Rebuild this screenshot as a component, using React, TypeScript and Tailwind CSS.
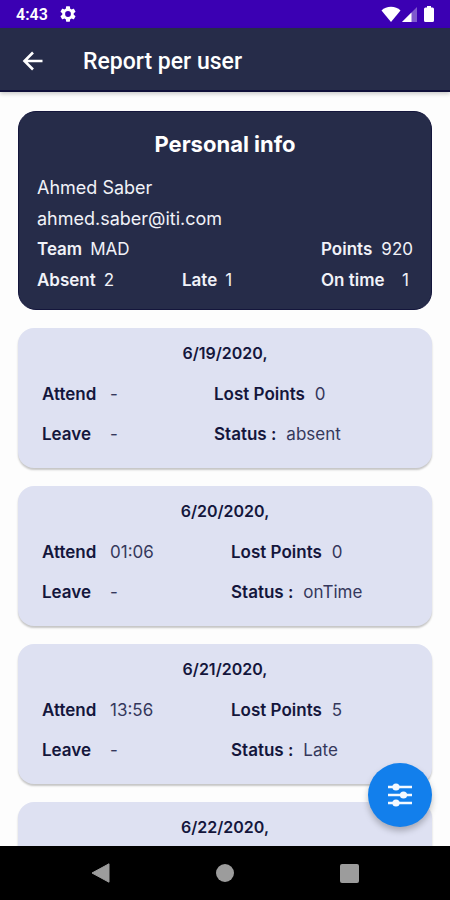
import type { ReactNode } from "react";

type Report = {
  date: string;
  details?: {
    attend: string;
    leave: string;
    lostPoints: number;
    status: string;
  };
};

const reports: Report[] = [
  { date: "6/19/2020,", details: { attend: "-", leave: "-", lostPoints: 0, status: "absent" } },
  { date: "6/20/2020,", details: { attend: "01:06", leave: "-", lostPoints: 0, status: "onTime" } },
  { date: "6/21/2020,", details: { attend: "13:56", leave: "-", lostPoints: 5, status: "Late" } },
  { date: "6/22/2020," },
];

export default function App() {
  return (
    <div className="flex h-dvh flex-col overflow-hidden bg-[#fdfdfd] font-[Inter,'Open_Sans',sans-serif]">
      <StatusBar />
      <AppBar title="Report per user" />
      <div className="relative min-h-0 flex-1">
        <main className="flex h-full flex-col gap-[18px] overflow-y-auto px-[18px] pt-[19px] [scrollbar-width:none]">
          <PersonalInfo />
          {reports.map((report) => (
            <ReportCard key={report.date} report={report} />
          ))}
        </main>
        <button
          aria-label="Filter"
          className="absolute right-[18px] bottom-[19px] flex size-16 items-center justify-center rounded-full bg-[#127fec] shadow-[0_4px_6px_rgba(0,0,0,0.25)]"
        >
          <svg viewBox="0 0 24 24" className="size-6" fill="#f4f9ff">
            <path d="M0 2.8h24v2.4H0zM0 10.8h24v2.4H0zM0 18.8h24v2.4H0z" />
            <circle cx="8" cy="4" r="3.6" />
            <circle cx="15.5" cy="12" r="3.6" />
            <circle cx="8" cy="20" r="3.6" />
          </svg>
        </button>
      </div>
      <NavBar />
    </div>
  );
}

function StatusBar() {
  return (
    <div className="flex h-7 shrink-0 items-center justify-between bg-[#3b00b3] pr-[15px] pl-4 font-[Roboto,sans-serif] text-white">
      <div className="flex items-center gap-3">
        <span className="pt-0.5 text-base leading-6 font-semibold">4:43</span>
        <svg viewBox="2 2 20 20" className="size-4" fill="currentColor">
          <path d="M19.14 12.94c.04-.3.06-.61.06-.94s-.02-.64-.07-.94l2.03-1.58a.49.49 0 0 0 .12-.61l-1.92-3.32a.49.49 0 0 0-.59-.22l-2.39.96a7 7 0 0 0-1.62-.94l-.36-2.54A.48.48 0 0 0 13.92 2.4h-3.84c-.24 0-.43.17-.47.41l-.36 2.54c-.59.24-1.13.57-1.62.94l-2.39-.96a.48.48 0 0 0-.59.22L2.74 8.87a.47.47 0 0 0 .12.61l2.03 1.58c-.05.3-.09.63-.09.94s.02.64.07.94l-2.03 1.58a.49.49 0 0 0-.12.61l1.92 3.32c.12.22.37.29.59.22l2.39-.96c.5.38 1.03.7 1.62.94l.36 2.54c.05.24.24.41.48.41h3.84c.24 0 .44-.17.47-.41l.36-2.54c.59-.24 1.13-.56 1.62-.94l2.39.96c.22.08.47 0 .59-.22l1.92-3.32a.47.47 0 0 0-.12-.61zM12 15.6A3.6 3.6 0 1 1 12 8.4a3.6 3.6 0 0 1 0 7.2z" />
        </svg>
      </div>
      <div className="flex items-center">
        <svg viewBox="0 0 20 16" className="h-4 w-5" fill="currentColor">
          <path d="M10 16 .5 4.5C3 2 6.3.8 10 .8s7 1.2 9.500 3.7z" />
        </svg>
        <svg viewBox="0 0 16 16" className="size-4" fill="currentColor">
          <path d="M16 1v15H1z" opacity=".35" />
          <path d="M10.5 6.5V16H1z" />
        </svg>
        <svg viewBox="0 0 12 16" className="ml-1.5 h-4 w-3" fill="currentColor">
          <path d="M4 0h4v1.5h1.5A1.5 1.5 0 0 1 11 3v11.5A1.5 1.5 0 0 1 9.500 16h-7A1.500 1.500 0 0 1 1 14.500V3a1.500 1.500 0 0 1 1.500-1.500H4z" />
        </svg>
      </div>
    </div>
  );
}

function AppBar({ title }: { title: string }) {
  return (
    <header className="z-10 flex h-16 shrink-0 items-center gap-10 border-b-2 border-[#10103a] bg-[#262c49] pt-1 pr-4 pl-[22px] text-white shadow-[0_2px_4px_rgba(0,0,0,0.2)]">
      <button aria-label="Back">
        <svg viewBox="0 0 21 20" className="h-5 w-[21px]" fill="none" stroke="currentColor" strokeWidth="2.6">
          <path d="M20.5 10H3M11 1.5 2.5 10l8.5 8.5" />
        </svg>
      </button>
      <h1 className="pt-0.5 font-[Roboto,sans-serif] text-[23px] leading-7 font-medium">{title}</h1>
    </header>
  );
}

function PersonalInfo() {
  return (
    <section className="shrink-0 rounded-[18px] border border-[#14163c] bg-[#262c49] px-[18px] pt-[17px] pb-[13px] text-[#f1f2f8]">
      <h2 className="text-center text-[22px] leading-[30px] font-bold text-white">Personal info</h2>
      <div className="mt-[13px] text-[17px] leading-[31px]">
        <p className="text-lg leading-[31px]">Ahmed Saber</p>
        <p className="text-lg leading-[31px]">ahmed.saber@iti.com</p>
        <div className="flex justify-between">
          <InfoItem label="Team">MAD</InfoItem>
          <div className="w-[92px]">
            <InfoItem label="Points" spread>
              920
            </InfoItem>
          </div>
        </div>
        <div className="grid grid-cols-[145px_1fr_92px]">
          <InfoItem label="Absent">2</InfoItem>
          <InfoItem label="Late">1</InfoItem>
          <div className="pr-1">
            <InfoItem label="On time" spread>
              1
            </InfoItem>
          </div>
        </div>
      </div>
    </section>
  );
}

function InfoItem({ label, spread, children }: { label: string; spread?: boolean; children: ReactNode }) {
  return (
    <p className={`flex whitespace-nowrap ${spread ? "justify-between" : "gap-2"}`}>
      <span className="font-semibold">{label}</span>
      <span>{children}</span>
    </p>
  );
}

function ReportCard({ report }: { report: Report }) {
  const { date, details } = report;
  // the second column starts further right once there is a clock-in time
  const columns = details?.attend === "-" ? "grid-cols-[172px_1fr]" : "grid-cols-[189px_1fr]";

  return (
    <article className="min-h-[140px] shrink-0 rounded-2xl bg-[#dee1f2] px-6 pt-[13px] pb-[22px] text-[17px] leading-6 text-[#14163c] shadow-[0_2px_2px_rgba(0,0,0,0.22)]">
      <h3 className="text-center text-base leading-6 font-semibold">{date}</h3>
      {details && (
        <div className={`mt-[17px] grid gap-y-4 ${columns}`}>
          <Field label="Attend" fixed>
            {details.attend}
          </Field>
          <Field label="Lost Points">{details.lostPoints}</Field>
          <Field label="Leave" fixed>
            {details.leave}
          </Field>
          <Field label="Status :">{details.status}</Field>
        </div>
      )}
    </article>
  );
}

function Field({ label, fixed, children }: { label: string; fixed?: boolean; children: ReactNode }) {
  return (
    <p className="flex whitespace-nowrap">
      <span className={`font-semibold ${fixed ? "w-[68px]" : "mr-2.5"}`}>{label}</span>
      <span className="text-[#35385c]">{children}</span>
    </p>
  );
}

function NavBar() {
  return (
    <nav className="grid h-[54px] shrink-0 grid-cols-3 items-center bg-black px-[39px] text-[#9c9c9c]">
      <button aria-label="Back" className="flex justify-center">
        <svg viewBox="0 0 20 20" className="size-5" fill="currentColor">
          <path d="M18 .8v18.4L1 10z" stroke="currentColor" strokeLinejoin="round" />
        </svg>
      </button>
      <button aria-label="Home" className="flex justify-center">
        <span className="size-[18px] rounded-full bg-current" />
      </button>
      <button aria-label="Recent apps" className="flex justify-center">
        <span className="size-[19px] rounded-xs bg-current" />
      </button>
    </nav>
  );
}
